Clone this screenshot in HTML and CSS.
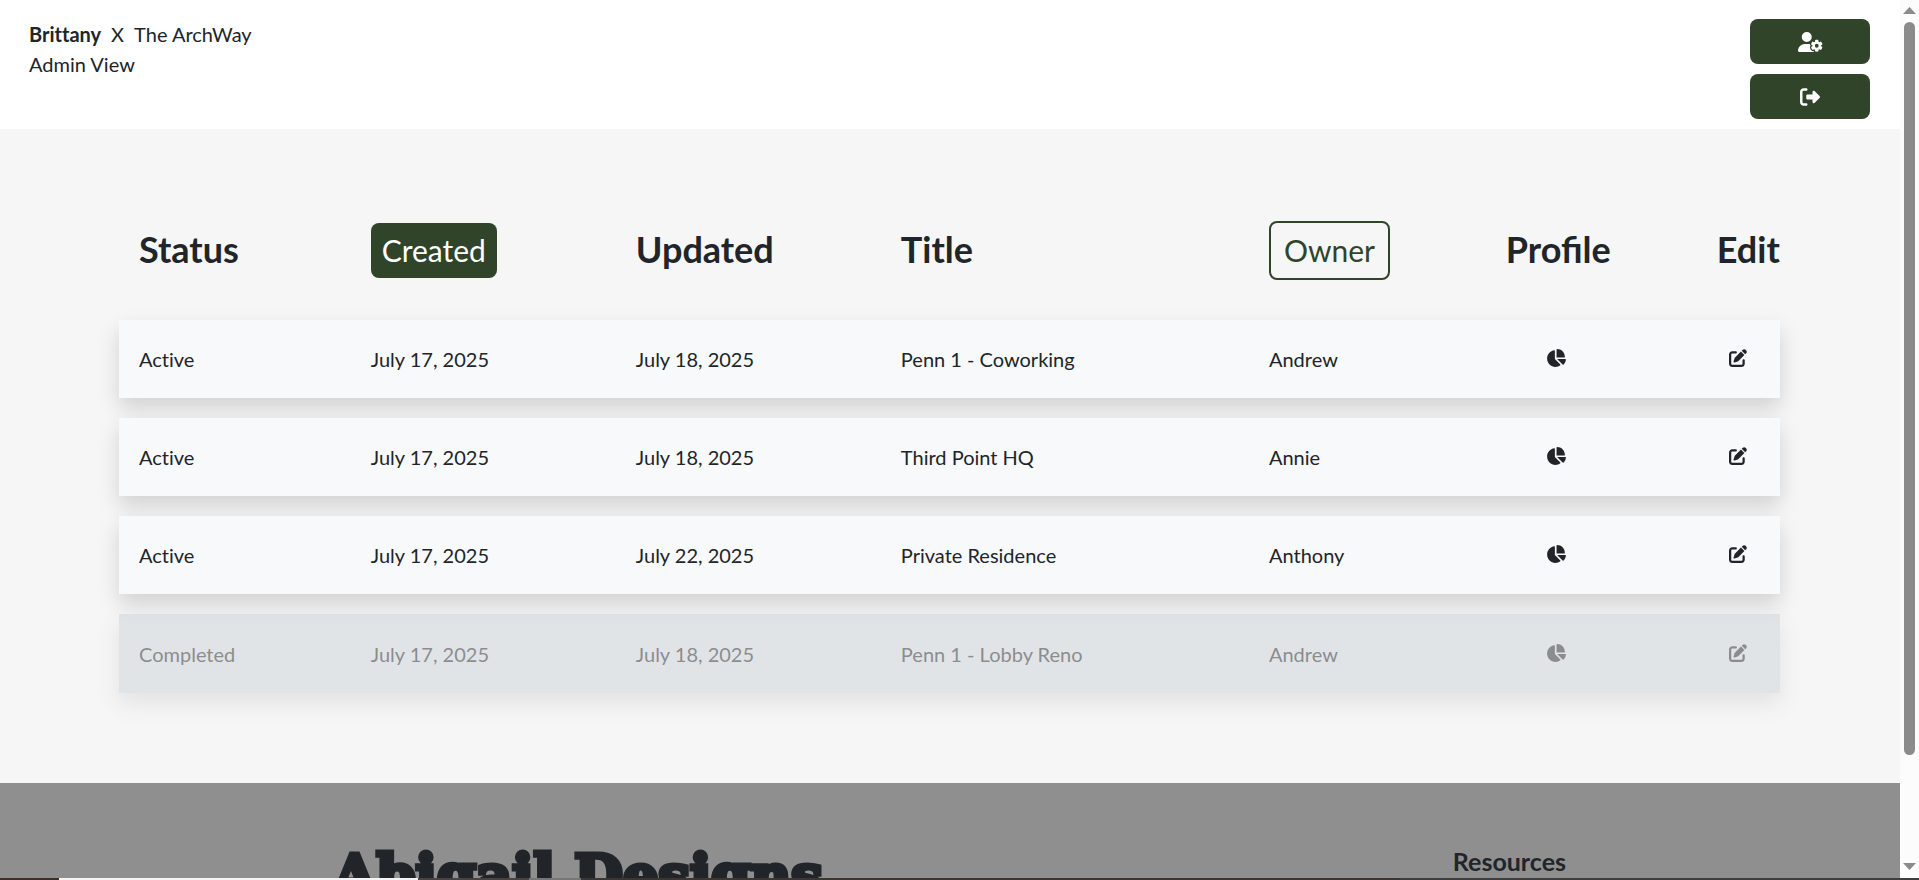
FILE: index.html
```html
<!DOCTYPE html>
<html lang="en">
<head>
<meta charset="utf-8">
<title>Admin View</title>
<link rel="stylesheet" href="styles.css">
</head>
<body>
<svg class="sprite" aria-hidden="true">
  <symbol id="pie" viewBox="0 0 576 512"><path d="M304 240V16.6c0-9 7-16.6 16-16.6C443.7 0 544 100.3 544 224c0 9-7.6 16-16.6 16H304zM32 272C32 150.7 122.1 50.3 239 34.3c9.2-1.3 17 6.1 17 15.4V288L412.5 444.5c6.7 6.7 6.2 17.7-1.5 23.1C371.8 495.6 323.8 512 272 512C139.5 512 32 404.6 32 272zm526.4 16c9.3 0 16.6 7.8 15.4 17c-7.7 55.9-34.6 105.6-73.9 142.3c-6 5.6-15.4 5.2-21.2-.7L320 288H558.4z"/></symbol>
  <symbol id="pen" viewBox="0 0 512 512"><path d="M471.6 21.7c-21.9-21.9-57.3-21.9-79.2 0L362.3 51.7l97.9 97.9 30.1-30.1c21.9-21.9 21.9-57.3 0-79.2L471.6 21.7zm-299.2 220c-6.1 6.1-10.8 13.6-13.5 21.9l-29.6 88.8c-2.9 8.6-.6 18.1 5.8 24.6s15.9 8.7 24.6 5.8l88.8-29.6c8.2-2.7 15.7-7.4 21.9-13.5L437.7 172.3 339.7 74.3 172.4 241.7zM96 64C43 64 0 107 0 160V416c0 53 43 96 96 96H352c53 0 96-43 96-96V320c0-17.7-14.3-32-32-32s-32 14.3-32 32v96c0 17.7-14.3 32-32 32H96c-17.7 0-32-14.3-32-32V160c0-17.7 14.3-32 32-32h96c17.7 0 32-14.3 32-32s-14.3-32-32-32H96z"/></symbol>
</svg>
<div class="window">
  <div class="page">
    <header class="topbar">
      <div class="who">
        <div class="names"><strong>Brittany</strong><span>X</span><span>The ArchWay</span></div>
        <div>Admin View</div>
      </div>
      <div class="actions">
        <button class="action" aria-label="Account settings"><svg width="25" height="20" viewBox="0 0 640 512"><path d="M224 0a128 128 0 1 1 0 256A128 128 0 1 1 224 0zM178.3 304h91.4c11.8 0 23.4 1.2 34.5 3.3c-2.1 18.5 7.4 35.6 21.8 44.8c-16.6 10.6-26.7 31.6-20 53.3c4 12.9 9.4 25.5 16.4 37.6s15.2 23.1 24.4 33c15.7 16.9 39.6 18.4 57.2 8.7v.9c0 9.2 2.7 18.5 7.9 26.3H29.7C13.3 512 0 498.7 0 482.3C0 383.8 79.8 304 178.3 304zM436 218.2c0-7 4.5-13.3 11.3-14.8c10.5-2.4 21.5-3.7 32.7-3.7s22.2 1.3 32.7 3.7c6.8 1.5 11.3 7.8 11.3 14.8v30.6c7.9 3.4 15.4 7.7 22.3 12.8l24.9-14.3c6.1-3.5 13.7-2.7 18.5 2.4c7.6 8.1 14.3 17.2 20.1 27.2s10.3 20.4 13.5 31c2.1 6.7-1.1 13.7-7.2 17.2l-25 14.4c.4 4 .7 8.1 .7 12.3s-.2 8.2-.7 12.3l25 14.4c6.1 3.5 9.2 10.5 7.2 17.2c-3.3 10.6-7.8 21-13.5 31s-12.5 19.1-20.1 27.2c-4.8 5.1-12.5 5.9-18.5 2.4l-24.9-14.3c-6.9 5.1-14.3 9.4-22.3 12.8l0 30.6c0 7-4.5 13.3-11.3 14.8c-10.5 2.4-21.5 3.7-32.7 3.7s-22.2-1.3-32.7-3.7c-6.8-1.5-11.3-7.8-11.3-14.8V454.8c-8-3.4-15.6-7.7-22.5-12.9l-24.7 14.3c-6.1 3.5-13.7 2.7-18.5-2.4c-7.6-8.1-14.3-17.2-20.1-27.2s-10.3-20.4-13.5-31c-2.1-6.7 1.1-13.7 7.2-17.2l24.8-14.3c-.4-4.1-.7-8.2-.7-12.4s.2-8.3 .7-12.4L343.8 325c-6.1-3.5-9.2-10.5-7.2-17.2c3.3-10.6 7.7-21 13.5-31s12.5-19.1 20.1-27.2c4.8-5.1 12.4-5.9 18.5-2.4l24.8 14.3c6.9-5.1 14.5-9.4 22.5-12.9V218.2zm92.1 133.5a48.1 48.1 0 1 0 -96.1 0 48.1 48.1 0 1 0 96.1 0z"/></svg></button>
        <button class="action" aria-label="Sign out"><svg width="20" height="20" viewBox="0 0 512 512"><path d="M377.9 105.9L500.7 228.7c7.2 7.2 11.3 17.1 11.3 27.3s-4.1 20.1-11.3 27.3L377.9 406.1c-6.4 6.4-15 9.9-24 9.9c-18.7 0-33.9-15.2-33.9-33.9l0-62.1-128 0c-17.7 0-32-14.3-32-32l0-64c0-17.7 14.3-32 32-32l128 0 0-62.1c0-18.7 15.2-33.9 33.9-33.9c9 0 17.6 3.6 24 9.9zM160 96L96 96c-17.7 0-32 14.3-32 32l0 256c0 17.7 14.3 32 32 32l64 0c17.7 0 32 14.3 32 32s-14.3 32-32 32l-64 0c-53 0-96-43-96-96L0 128C0 75 43 32 96 32l64 0c17.7 0 32 14.3 32 32s-14.3 32-32 32z"/></svg></button>
      </div>
    </header>
    <main class="content">
      <table class="projects">
        <colgroup><col class="c-status"><col class="c-date"><col class="c-date"><col class="c-title"><col class="c-owner"><col class="c-profile"><col class="c-edit"></colgroup>
        <thead>
          <tr><th>Status</th><th><button class="sort sort-on">Created</button></th><th>Updated</th><th>Title</th><th><button class="sort">Owner</button></th><th>Profile</th><th>Edit</th></tr>
        </thead>
        <tbody>
          <tr><td>Active</td><td>July 17, 2025</td><td>July 18, 2025</td><td>Penn 1 - Coworking</td><td>Andrew</td><td class="profile"><button class="icon" aria-label="Profile"><svg width="20" height="18"><use href="#pie"/></svg></button></td><td class="edit"><button class="icon" aria-label="Edit"><svg width="18" height="18"><use href="#pen"/></svg></button></td></tr>
          <tr><td>Active</td><td>July 17, 2025</td><td>July 18, 2025</td><td>Third Point HQ</td><td>Annie</td><td class="profile"><button class="icon" aria-label="Profile"><svg width="20" height="18"><use href="#pie"/></svg></button></td><td class="edit"><button class="icon" aria-label="Edit"><svg width="18" height="18"><use href="#pen"/></svg></button></td></tr>
          <tr><td>Active</td><td>July 17, 2025</td><td>July 22, 2025</td><td>Private Residence</td><td>Anthony</td><td class="profile"><button class="icon" aria-label="Profile"><svg width="20" height="18"><use href="#pie"/></svg></button></td><td class="edit"><button class="icon" aria-label="Edit"><svg width="18" height="18"><use href="#pen"/></svg></button></td></tr>
          <tr class="done"><td>Completed</td><td>July 17, 2025</td><td>July 18, 2025</td><td>Penn 1 - Lobby Reno</td><td>Andrew</td><td class="profile"><button class="icon" aria-label="Profile"><svg width="20" height="18"><use href="#pie"/></svg></button></td><td class="edit"><button class="icon" aria-label="Edit"><svg width="18" height="18"><use href="#pen"/></svg></button></td></tr>
        </tbody>
      </table>
    </main>
    <footer class="footer">
      <div class="brand">Abigail Designs</div>
      <div class="resources">Resources</div>
    </footer>
  </div>
  <div class="scrollbar" aria-hidden="true">
    <svg width="13" height="7" viewBox="0 0 13 7"><path d="M6.500 0L13 7H0z"/></svg>
    <div class="track"><div class="thumb"></div></div>
    <svg width="13" height="7" viewBox="0 0 13 7"><path d="M0 0H13L6.500 7z"/></svg>
  </div>
</div>
<div class="edge"></div>
</body>
</html>
```
FILE: styles.css
```css
* { box-sizing: border-box; }

body {
  margin: 0;
  height: 100vh;
  display: flex;
  flex-direction: column;
  overflow: hidden;
  font-family: Lato, "Liberation Sans", sans-serif;
  font-size: 20px;
  line-height: 30px;
  font-variant-ligatures: none;
  color: #212529;
  background: #fff;
}

button {
  font: inherit;
  color: inherit;
  cursor: pointer;
}

svg { display: block; fill: currentColor; }
.sprite { position: absolute; width: 0; height: 0; }

.window { flex: 1; min-height: 0; display: flex; }
.page { flex: 1; min-width: 0; overflow: hidden; display: flex; flex-direction: column; }

.topbar {
  display: flex;
  justify-content: space-between;
  padding: 19px 30px 10px 29px;
}
.names { display: flex; gap: 10px; }
.actions { display: flex; flex-direction: column; gap: 10px; }
.action {
  width: 120px;
  height: 45px;
  display: flex;
  align-items: center;
  justify-content: center;
  border: 0;
  border-radius: 8px;
  background: #2f4429;
  color: #fff;
}

.content { background: #f6f6f6; padding: 52px 120px 70px 119px; }
.projects {
  width: 100%;
  table-layout: fixed;
  border-collapse: separate;
  border-spacing: 0 20px;
}
.c-status { width: 15.15%; }
.c-date { width: 15.95%; }
.c-title { width: 22.15%; }
.c-owner { width: 14.25%; }
.c-profile { width: 12.7%; }
.c-edit { width: 3.8%; }

th, td { padding: 0; text-align: left; vertical-align: middle; white-space: nowrap; }
th:first-child, td:first-child { padding-left: 20px; }
th {
  height: 99px;
  padding-bottom: 4px;
  font-size: 36px;
  line-height: 42px;
  font-weight: 700;
  font-variant-ligatures: normal;
}
td { height: 78px; }

.sort {
  display: block;
  margin-top: 4px;
  padding: 5px 13px;
  border: 2px solid #2f4429;
  border-radius: 8px;
  background: transparent;
  color: #2f4429;
  font-size: 30px;
  line-height: 45px;
  font-weight: 400;
}
.sort-on { padding: 5px 11px; border: 0; background: #2f4429; color: #fff; }

tbody tr { background: #f8f9fb; box-shadow: 0 10px 20px rgba(0, 0, 0, 0.15); }
tbody .done { background: #cdd3d8; opacity: 0.5; }
.done td { height: 79px; }
.icon { display: block; padding: 0; border: 0; background: none; }
.profile, .edit { padding-bottom: 2px; }
.profile { padding-left: 40px; }
.edit { padding-left: 12px; }

.footer {
  flex: 1 0 auto;
  display: flex;
  align-items: flex-start;
  justify-content: space-between;
  height: 200px;
  padding: 58px 334px 0 333px;
  background: #8f8f8f;
  font-weight: 700;
}
.brand {
  font-family: "DejaVu Serif", serif;
  font-size: 56px;
  line-height: 68px;
  -webkit-text-stroke: 5px #212529;
  white-space: nowrap;
}
.resources { font-size: 25px; line-height: 40px; }

.scrollbar {
  width: 19px;
  display: flex;
  flex-direction: column;
  align-items: center;
  gap: 8px;
  padding: 7px 0 8px;
  background: #fcfcfc;
  color: #8b8b8b;
}
.track { flex: 1; }
.thumb { width: 11px; height: 88%; border-radius: 6px; background: #8b8b8b; }

.edge {
  height: 2px;
  background: linear-gradient(to right, #402e28 59px, #f5f3f3 59px 418px, #4a4340 418px 529px, #777 529px 581px, #3d3530 581px 1400px, #403f3f 1400px);
}
```
